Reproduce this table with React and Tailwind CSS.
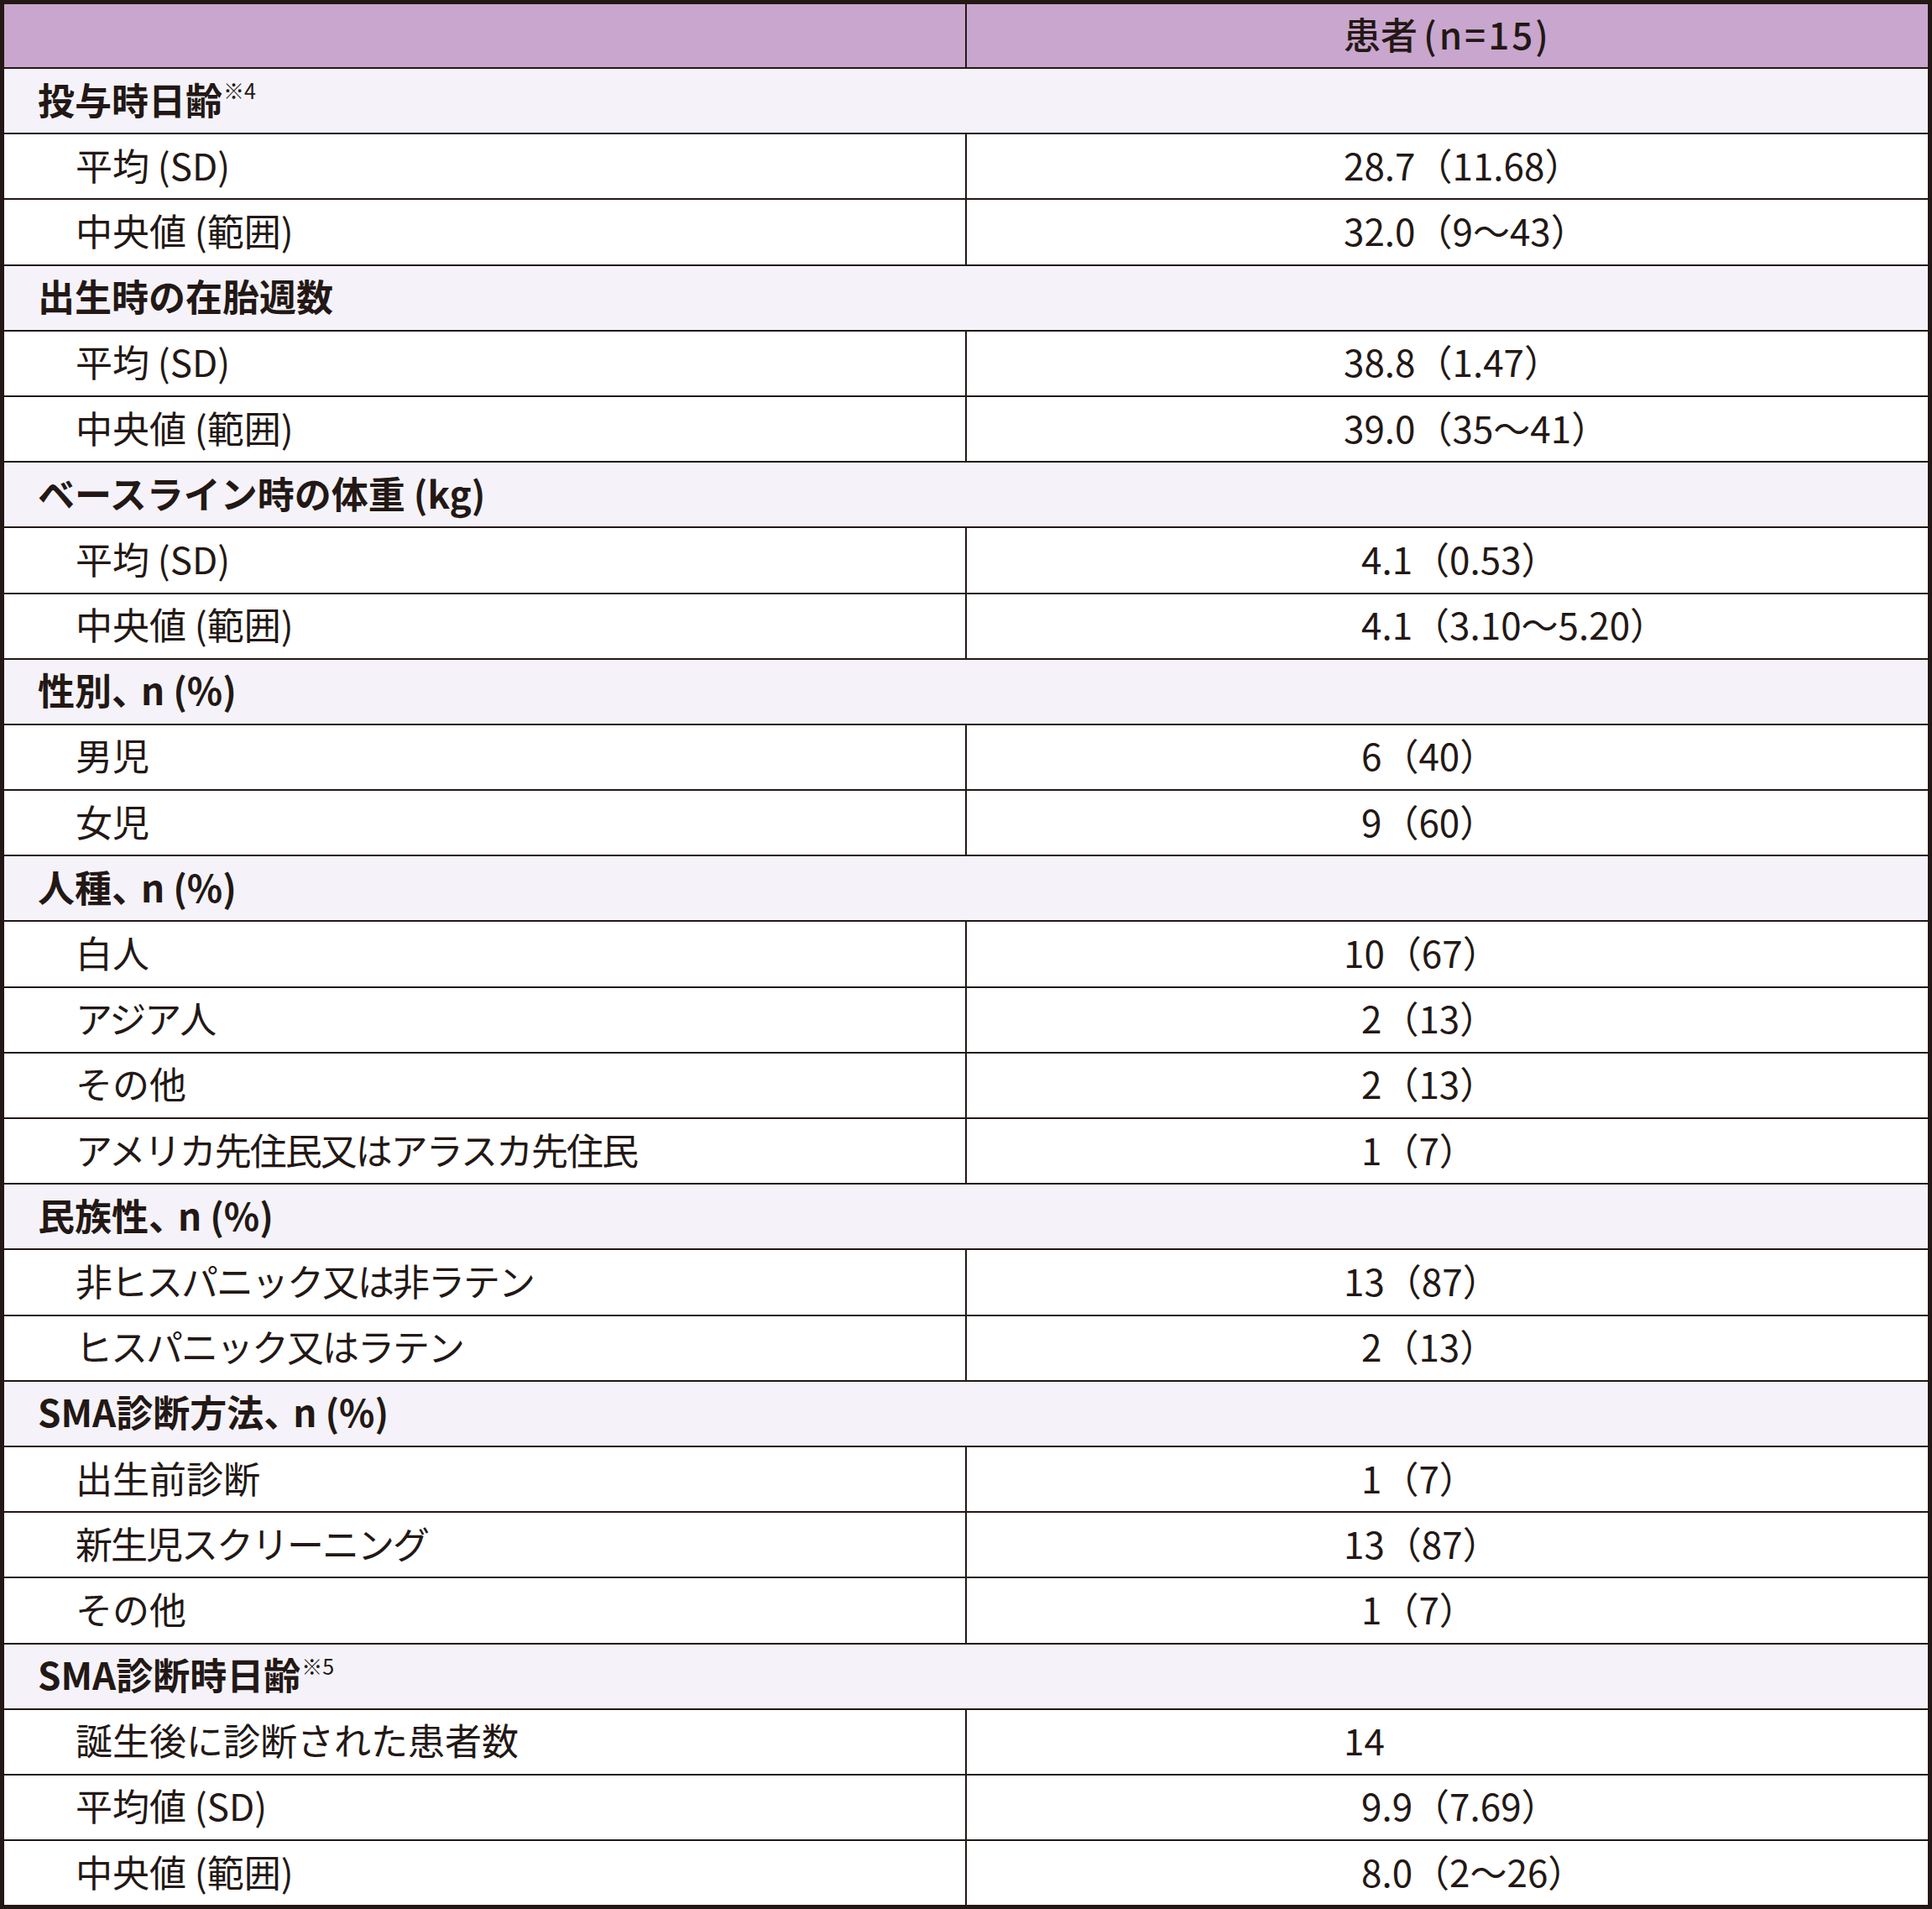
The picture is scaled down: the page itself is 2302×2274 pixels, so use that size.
const rows = [
  { cat: "投与時日齢", note: "※4" },
  { label: "平均 (SD)", value: "28.7（11.68）" },
  { label: "中央値 (範囲)", value: "32.0（9〜43）" },
  { cat: "出生時の在胎週数" },
  { label: "平均 (SD)", value: "38.8（1.47）" },
  { label: "中央値 (範囲)", value: "39.0（35〜41）" },
  { cat: "ベースライン時の体重 (kg)" },
  { label: "平均 (SD)", value: "4.1（0.53）", pad: true },
  { label: "中央値 (範囲)", value: "4.1（3.10〜5.20）", pad: true },
  { cat: "性別", n: true },
  { label: "男児", value: "6（40）", pad: true },
  { label: "女児", value: "9（60）", pad: true },
  { cat: "人種", n: true },
  { label: "白人", value: "10（67）" },
  { label: "アジア人", value: "2（13）", pad: true, tight: true },
  { label: "その他", value: "2（13）", pad: true },
  { label: "アメリカ先住民又はアラスカ先住民", value: "1（7）", pad: true, tight: true },
  { cat: "民族性", n: true },
  { label: "非ヒスパニック又は非ラテン", value: "13（87）", tight: true },
  { label: "ヒスパニック又はラテン", value: "2（13）", pad: true, tight: true },
  { cat: "SMA診断方法", n: true },
  { label: "出生前診断", value: "1（7）", pad: true },
  { label: "新生児スクリーニング", value: "13（87）", tight: true },
  { label: "その他", value: "1（7）", pad: true },
  { cat: "SMA診断時日齢", note: "※5" },
  { label: "誕生後に診断された患者数", value: "14" },
  { label: "平均値 (SD)", value: "9.9（7.69）", pad: true },
  { label: "中央値 (範囲)", value: "8.0（2〜26）", pad: true },
];

const font = {
  fontFamily: '"Noto Sans CJK JP", "Noto Sans", sans-serif',
};

export default function App() {
  return (
    <div
      className="w-[2302px] h-[2274px] bg-white text-[#231815] text-[44px] leading-none"
      style={font}
    >
      <div className="border-[5px] border-[#231815] bg-white">
        <div className="flex h-[75px] bg-[#c9a6cd]">
          <div className="w-[1145px]" />
          <div className="flex-1 border-l-2 border-[#231815] flex items-center pl-[449px] pb-[5px] font-medium">
            <span>患者</span>
            <span className="ml-[7px] tracking-[3px]">(n=15)</span>
          </div>
        </div>

        {rows.map((r, i) =>
          r.cat ? (
            <div
              key={i}
              className="h-[78.2px] border-t-2 border-[#231815] bg-[#f5f3f9] flex items-center pl-[40px] pb-[5px] font-bold"
            >
              {r.n ? (
                <span>
                  {r.cat}
                  <span className="tracking-[-9px]">、</span>n (%)
                </span>
              ) : (
                <span>{r.cat}</span>
              )}
              {r.note && (
                <span className="self-start mt-[13px] ml-[1px] text-[25px] font-normal">
                  {r.note}
                </span>
              )}
            </div>
          ) : (
            <div key={i} className="h-[78.2px] border-t-2 border-[#231815] flex">
              <div className="w-[1145px] flex items-center pl-[85px] pb-[5px]">
                <span className={r.tight ? "tracking-[-2px]" : ""}>{r.label}</span>
              </div>
              <div
                className={`flex-1 border-l-2 border-[#231815] flex items-center pb-[5px] ${
                  r.pad ? "pl-[470px]" : "pl-[449px]"
                }`}
              >
                {r.value}
              </div>
            </div>
          )
        )}
      </div>
    </div>
  );
}
